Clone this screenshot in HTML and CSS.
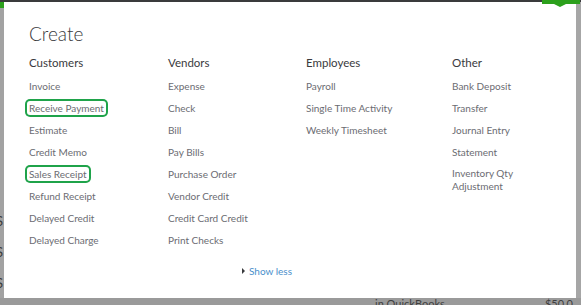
FILE: index.html
```html
<!DOCTYPE html>
<html lang="en">
<head>
    <meta charset="UTF-8">
    <meta name="viewport" content="width=device-width, initial-scale=1.0">
    <title>Create</title>
    <link rel="stylesheet" href="styles.css">
</head>
<body>
    <div class="topbar"></div>
    <div class="middle">
      <div class="side side-left">
        <span>S</span><span>S</span><span>S</span>
      </div>

      <div class="modal">
        <h2 class="title">Create</h2>

        <div class="columns">
          <div class="col">
            <h3>Customers</h3>
            <a class="item">Invoice</a>
            <a class="item marked">Receive Payment</a>
            <a class="item">Estimate</a>
            <a class="item">Credit Memo</a>
            <a class="item marked">Sales Receipt</a>
            <a class="item">Refund Receipt</a>
            <a class="item">Delayed Credit</a>
            <a class="item">Delayed Charge</a>
          </div>
          <div class="col">
            <h3>Vendors</h3>
            <a class="item">Expense</a>
            <a class="item">Check</a>
            <a class="item">Bill</a>
            <a class="item">Pay Bills</a>
            <a class="item">Purchase Order</a>
            <a class="item">Vendor Credit</a>
            <a class="item">Credit Card Credit</a>
            <a class="item">Print Checks</a>
          </div>
          <div class="col">
            <h3>Employees</h3>
            <a class="item">Payroll</a>
            <a class="item">Single Time Activity</a>
            <a class="item">Weekly Timesheet</a>
          </div>
          <div class="col">
            <h3>Other</h3>
            <a class="item">Bank Deposit</a>
            <a class="item">Transfer</a>
            <a class="item">Journal Entry</a>
            <a class="item">Statement</a>
            <a class="item two-line">Inventory Qty<br>Adjustment</a>
          </div>
        </div>

        <div class="more">
          <span class="arrow"></span>
          <a class="show-less">Show less</a>
        </div>
      </div>

      <div class="side side-right"></div>
    </div>
    <div class="bottombar">
      <span class="qb">in QuickBooks</span>
      <span class="amount">$50.0</span>
    </div>

    <div class="new-caret"></div>
</body>
</html>
```

FILE: styles.css
```css
body {
    margin: 0;
    background-color: #9d9d9d;
    font-family: "Lato", "Liberation Sans", sans-serif;
    position: relative;
    overflow: hidden;
}

.topbar {
    height: 2px;
    background-color: #3a3b3c;
}

.middle {
    display: flex;
    height: 296px;
}

.side {
    background-color: #a2a2a2;
}

.side-left {
    width: 4px;
    overflow: hidden;
    display: flex;
    flex-direction: column;
    padding-top: 206px;
    gap: 17px;
    box-sizing: border-box;
    font-size: 13px;
    line-height: 14px;
    color: #3a3a3a;
    border-top: 6px solid #2ca01c;
}

.side-left span {
    margin-left: -4px;
}

.side-right {
    width: 5px;
    background-color: #a6a6a6;
}

.modal {
    width: 572px;
    background-color: #fff;
    padding: 20px 0 0 25px;
    box-sizing: border-box;
}

.title {
    margin: 0;
    font-size: 19px;
    font-weight: 300;
    line-height: 24px;
    color: #393a3d;
}

.columns {
    display: grid;
    grid-template-columns: 139px 138px 146px 1fr;
    margin-top: 9px;
}

.col {
    display: flex;
    flex-direction: column;
    align-items: flex-start;
}

.col h3 {
    margin: 0;
    font-size: 11.5px;
    font-weight: normal;
    line-height: 16px;
    color: #393a3d;
}

.item {
    margin-top: 8px;
    font-size: 10px;
    line-height: 14px;
    color: #6b6c72;
}

.two-line {
    line-height: 13px;
}

.marked {
    padding: 0 2px;
    margin-left: -2px;
    border-radius: 3px;
    box-shadow: 0 0 0 2px #1fa34a;
}

.more {
    display: flex;
    align-items: center;
    gap: 4px;
    margin: 17px 0 0 213px;
    line-height: 14px;
}

.arrow {
    width: 0;
    height: 0;
    border-top: 3px solid transparent;
    border-bottom: 3px solid transparent;
    border-left: 3px solid #393a3d;
}

.show-less {
    font-size: 10px;
    color: #4a8fcb;
}

.bottombar {
    height: 7px;
    overflow: hidden;
    background-color: #9a9a9a;
    font-size: 11px;
    color: #3f3f3f;
    display: flex;
    line-height: 14px;
}

.qb {
    margin-left: 375px;
    margin-top: -1px;
}

.amount {
    margin-left: auto;
    margin-right: 8px;
    margin-top: -1px;
}

/* green "New" button peeking over the top */
.new-caret {
    position: absolute;
    top: 0;
    left: 542px;
    width: 38px;
    height: 4px;
    background-color: #2ca01c;
}

.new-caret::after {
    content: "";
    position: absolute;
    top: 4px;
    left: 12px;
    border-left: 6px solid transparent;
    border-right: 6px solid transparent;
    border-top: 3px solid #2ca01c;
}
```
